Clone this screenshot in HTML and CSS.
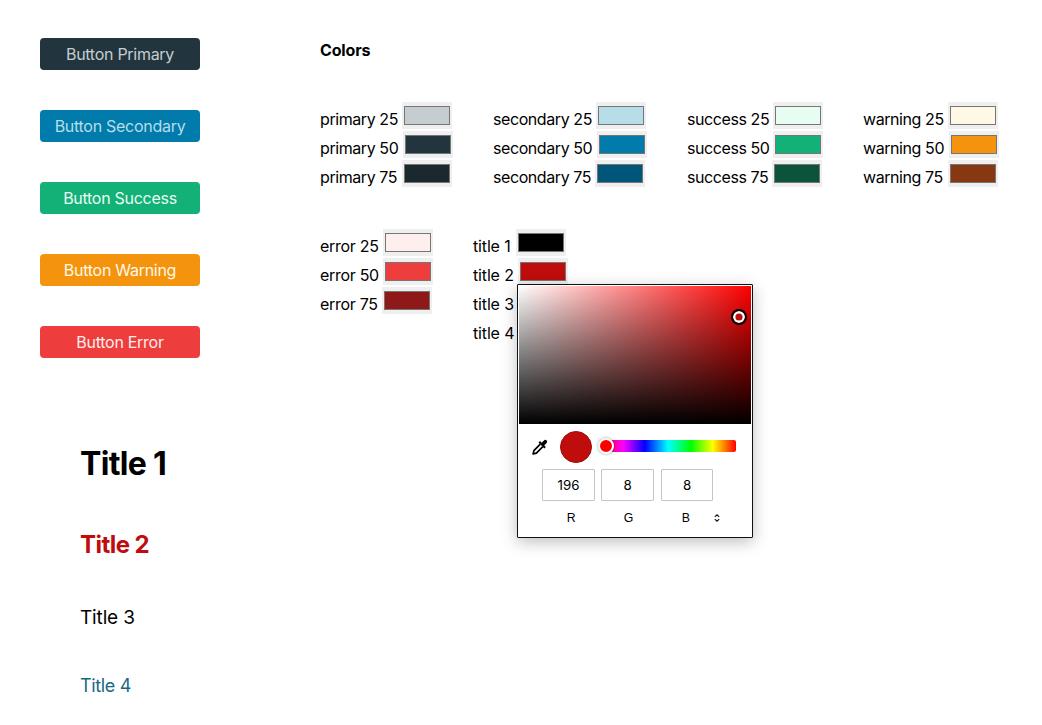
FILE: index.html
```html
<!DOCTYPE html>
<html lang="en">
<head>
<meta charset="utf-8">
<title>Theme colors</title>
<link rel="stylesheet" href="styles.css">
</head>
<body>
<div class="page">
  <aside class="preview">
    <div class="buttons">
      <button class="btn primary">Button Primary</button>
      <button class="btn secondary">Button Secondary</button>
      <button class="btn success">Button Success</button>
      <button class="btn warning">Button Warning</button>
      <button class="btn error">Button Error</button>
    </div>
    <div class="titles">
      <h1 class="t1">Title 1</h1>
      <h2 class="t2">Title 2</h2>
      <h3 class="t3">Title 3</h3>
      <h4 class="t4">Title 4</h4>
    </div>
  </aside>
  <main class="colors">
    <h5 class="heading">Colors</h5>
    <div class="groups">
      <div class="group g-primary">
        <div class="row"><label>primary 25</label><span class="well"><i class="p25"></i></span></div>
        <div class="row mid"><label>primary 50</label><span class="well"><i class="p50"></i></span></div>
        <div class="row"><label>primary 75</label><span class="well"><i class="p75"></i></span></div>
      </div>
      <div class="group g-secondary">
        <div class="row"><label>secondary 25</label><span class="well"><i class="s25"></i></span></div>
        <div class="row mid"><label>secondary 50</label><span class="well"><i class="s50"></i></span></div>
        <div class="row low"><label>secondary 75</label><span class="well"><i class="s75"></i></span></div>
      </div>
      <div class="group g-success">
        <div class="row"><label>success 25</label><span class="well"><i class="u25"></i></span></div>
        <div class="row"><label>success 50</label><span class="well"><i class="u50"></i></span></div>
        <div class="row low"><label>success 75</label><span class="well"><i class="u75"></i></span></div>
      </div>
      <div class="group g-warning">
        <div class="row"><label>warning 25</label><span class="well"><i class="w25"></i></span></div>
        <div class="row mid"><label>warning 50</label><span class="well"><i class="w50"></i></span></div>
        <div class="row"><label>warning 75</label><span class="well"><i class="w75"></i></span></div>
      </div>
    </div>
    <div class="groups">
      <div class="group g-error">
        <div class="row"><label>error 25</label><span class="well"><i class="e25"></i></span></div>
        <div class="row"><label>error 50</label><span class="well"><i class="e50"></i></span></div>
        <div class="row low"><label>error 75</label><span class="well"><i class="e75"></i></span></div>
      </div>
      <div class="group g-title">
        <div class="row"><label>title 1</label><span class="well"><i class="c1"></i></span></div>
        <div class="row wide"><label>title 2</label><span class="well"><i class="c2"></i></span></div>
        <div class="row"><label>title 3</label></div>
        <div class="row"><label>title 4</label></div>
        <div class="picker">
          <div class="spectrum"><span class="handle"></span></div>
          <div class="controls">
            <svg class="dropper" width="16" height="16" viewBox="0 0 16 16">
              <path d="M8.3 5.2 1.9 11.6 1.1 14.9 4.4 14.1 10.8 7.7" fill="none" stroke="#000" stroke-width="1.7" stroke-linejoin="round"/>
              <path d="M6.5 3.6 8 2.1 9.7 3.8 12 1.4Q13.3.2 14.7 1.4 15.8 2.8 14.6 4.1L12.2 6.4 13.8 8 12.4 9.5Z"/>
            </svg>
            <span class="current"></span>
            <div class="hue"><span class="thumb"></span></div>
          </div>
          <div class="values"><span>196</span><span>8</span><span>8</span></div>
          <div class="channels"><span>R</span><span>G</span><span>B</span>
            <svg width="6" height="8" viewBox="0 0 6 8"><path d="M.8 2.9 3 .8 5.2 2.9M.8 5.1 3 7.2 5.2 5.1" fill="none" stroke="#111" stroke-width="1.1"/></svg>
          </div>
        </div>
      </div>
    </div>
  </main>
</div>
</body>
</html>
```
FILE: styles.css
```css
* { box-sizing: border-box; }
body { margin: 0; background: #fff; color: #000; font: 16px/24px Inter, sans-serif; overflow: hidden; }
.page { display: flex; height: 725px; }
.preview { width: 320px; padding: 38px 40px 0; }
.buttons { display: flex; flex-direction: column; gap: 40px; width: 160px; }
.btn { height: 32px; padding: 0; border: 0; border-radius: 4px; font: 16px/32px Inter, sans-serif; letter-spacing: -.28px; white-space: nowrap; }
.btn.primary { background: #22353e; color: #c5cdd0; }
.btn.secondary { background: #007bab; color: #b7dde8; }
.btn.success { background: #13b077; color: #e8fdf2; }
.btn.warning { background: #f4940e; color: #fff8e5; }
.btn.error { background: #ee3d3d; color: #ffeeee; }
.titles { padding: 86px 0 0 40px; }
.titles > * { margin: 0; white-space: nowrap; }
.t1 { font-size: 32px; line-height: 40px; letter-spacing: -.7px; }
.titles .t2 { font-size: 24px; line-height: 30px; letter-spacing: -.55px; color: #bf0c0c; margin-top: 46px; }
.titles .t3 { font-size: 19px; line-height: 24px; font-weight: 400; letter-spacing: -.15px; margin-top: 46px; }
.titles .t4 { font-size: 18px; line-height: 24px; font-weight: 400; letter-spacing: -.35px; color: #176983; margin-top: 44px; }

.colors { padding-top: 38px; }
.heading { margin: 0 0 40px; font-size: 16px; line-height: 24px; letter-spacing: -.15px; }
.groups { display: flex; margin-bottom: 40px; }
.group { position: relative; letter-spacing: -.42px; }
.row { display: flex; height: 29px; align-items: flex-start; }
.row label { width: var(--w); height: 29px; line-height: 34px; white-space: nowrap; }
.row.mid label { width: calc(var(--w) + 1px); }
.row.low label { width: calc(var(--w) - 1px); }
.row.wide label { width: calc(var(--w) + 2px); }
.g-primary { --w: 82px; width: 173px; }
.g-secondary { --w: 103px; width: 194px; }
.g-success { --w: 86px; width: 176px; }
.g-warning { --w: 85px; width: 136px; }
.g-error { --w: 63px; width: 153px; letter-spacing: -.3px; }
.g-title { --w: 43px; width: 100px; letter-spacing: -.15px; }
.well { width: 50px; height: 27px; padding: 4px 2px; background: #efefef; }
.well i { display: block; width: 46px; height: 19px; border: 1px solid #767676; }
.p25 { background: #c5cdd0; } .p50 { background: #22353e; } .p75 { background: #1b292f; }
.s25 { background: #b7dde8; } .s50 { background: #007bab; } .s75 { background: #005578; }
.u25 { background: #e8fdf2; } .u50 { background: #13b077; } .u75 { background: #0b543b; }
.w25 { background: #fff8e5; } .w50 { background: #f4940e; } .w75 { background: #873712; }
.e25 { background: #ffeeee; } .e50 { background: #ee3d3d; } .e75 { background: #8f1919; }
.c1 { background: #000; } .c2 { background: #bf0c0c; }

.picker { position: absolute; left: 44px; top: 55px; width: 236px; height: 254px; padding: 1px; border: 1px solid #111; border-radius: 1px; background: #fff; box-shadow: 0 4px 16px rgba(0,0,0,.26); letter-spacing: 0; }
.spectrum { position: relative; height: 138px; background: linear-gradient(to top, #000, transparent), linear-gradient(to right, #fff, #f00); }
.handle { position: absolute; left: 212px; top: 23px; width: 16px; height: 16px; border: 2px solid #000; border-radius: 50%; background: #bf0c0c; box-shadow: inset 0 0 0 2.4px #fff; }
.controls { display: flex; align-items: center; height: 45px; padding-left: 13px; }
.current { width: 32px; height: 32px; margin-left: 12px; border: 1px solid #a90a0a; border-radius: 50%; background: #bf0c0c; }
.hue { position: relative; width: 136px; height: 12px; margin: -1px 0 0 8px; border-radius: 2px; background: linear-gradient(to left, #f00, #ff0 17%, #0f0 33%, #0ff 50%, #00f 67%, #f0f 83%, #f00); }
.thumb { position: absolute; left: -2px; top: -2px; width: 16px; height: 16px; border: 2px solid #fff; border-radius: 50%; background: #f00; box-shadow: 0 0 3px rgba(0,0,0,.4); }
.values { display: flex; gap: 6px; padding-left: 23px; }
.values span { width: 53px; height: 32px; border: 1px solid #c5c5c5; border-radius: 1px; text-align: center; font-size: 13.33px; line-height: 31px; }
.values span:last-child { width: 52px; margin-left: 1px; }
.channels { display: flex; align-items: center; height: 33px; padding: 1px 0 0 23.5px; font: 12.3px/33px "Liberation Sans", Arial, sans-serif; }
.channels span { width: 57.3px; text-align: center; }
```
